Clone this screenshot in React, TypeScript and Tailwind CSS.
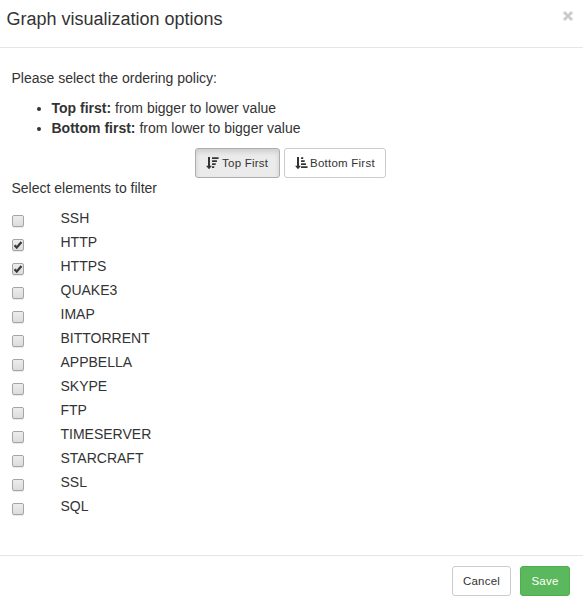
import React, { useState } from "react";

const PROTOCOLS = [
  "SSH", "HTTP", "HTTPS", "QUAKE3", "IMAP", "BITTORRENT", "APPBELLA",
  "SKYPE", "FTP", "TIMESERVER", "STARCRAFT", "SSL", "SQL",
];

function SortIcon({ widths }: { widths: number[] }) {
  return (
    <svg width="13" height="12" viewBox="0 0 13 12" className="block shrink-0" fill="currentColor" aria-hidden="true">
      <path d="M2 0h2v8.8h1.4q.5.1.2.5L3.2 11.9q-.2.1-.4 0L.4 9.3q-.3-.4.2-.5H2z" />
      {widths.map((w, i) => (
        <rect key={i} x="6" y={i * 3 + 0.2} width={w} height="1.7" rx="0.2" />
      ))}
    </svg>
  );
}

function Checkbox({ checked, onChange, label }: { checked: boolean; onChange: () => void; label: string }) {
  return (
    <button
      type="button"
      role="checkbox"
      aria-checked={checked}
      aria-label={label}
      onClick={onChange}
      className="mt-[7px] flex size-3 items-center justify-center rounded-[2px] border border-[#a5a5a5] bg-linear-to-b from-[#ededed] to-[#dcdcdc] shadow-[0_1px_0_#e8e8e8]"
    >
      {checked && (
        <svg width="10" height="10" viewBox="0 0 10 10" className="block shrink-0" fill="none" aria-hidden="true">
          <path d="M1.5 5.3 3.7 7.5 8.5 2.1" stroke="#3c3c3c" strokeWidth="2.3" />
        </svg>
      )}
    </button>
  );
}

export default function App() {
  const [checked, setChecked] = useState<string[]>(["HTTP", "HTTPS"]);
  const [order, setOrder] = useState("top");
  const toggle = (name: string) =>
    setChecked((c) => (c.includes(name) ? c.filter((n) => n !== name) : [...c, name]));
  const active = "border-[#adadad] bg-[#ebebeb] shadow-[inset_0_3px_5px_rgba(0,0,0,0.125)]";
  const idle = "border-[#ccc] bg-white";

  return (
    <div className="flex h-[602px] w-[583px] flex-col overflow-hidden bg-white font-['Liberation_Sans',Arial,sans-serif] text-[14px] leading-5 text-[#333]">
      <header className="flex h-12 shrink-0 items-start justify-between border-b border-[#e5e5e5] pl-[6.5px] pr-[9px]">
        <h4 className="pt-[6px] text-[18px] leading-[26px]">Graph visualization options</h4>
        <button type="button" aria-label="Close" className="mt-[10px] text-[#ccc]">
          <svg width="12" height="12" viewBox="0 0 12 12" className="block" aria-hidden="true">
            <path d="m2 2 8 8m0-8-8 8" stroke="currentColor" strokeWidth="2.9" />
          </svg>
        </button>
      </header>

      <main className="flex-1 pl-[11.5px] pr-3 pt-5">
        <p className="mb-[10px]">Please select the ordering policy:</p>
        <ul className="mb-[10px] list-disc pl-10">
          <li><b>Top first:</b> from bigger to lower value</li>
          <li><b>Bottom first:</b> from lower to bigger value</li>
        </ul>
        <div className="flex justify-center gap-1 pr-[1.5px] text-[11.5px] leading-[18px] tracking-[0.24px]">
          <button type="button" onClick={() => setOrder("top")} className={`flex h-[30px] w-[85px] items-center gap-[3px] whitespace-nowrap rounded-[3px] border pl-[10px] ${order === "top" ? active : idle}`}>
            <SortIcon widths={[6.5, 5, 3.7, 2.2]} />
            Top First
          </button>
          <button type="button" onClick={() => setOrder("bottom")} className={`flex h-[30px] w-[102px] items-center gap-[2px] whitespace-nowrap rounded-[3px] border pl-[10px] ${order === "bottom" ? active : idle}`}>
            <SortIcon widths={[2.2, 3.7, 5, 6.5]} />
            Bottom First
          </button>
        </div>
        <p className="mb-[10px]">Select elements to filter</p>
        <ul>
          {PROTOCOLS.map((name) => (
            <li key={name} className="grid h-6 grid-cols-[49px_1fr] items-start">
              <Checkbox label={name} checked={checked.includes(name)} onChange={() => toggle(name)} />
              <span>{name}</span>
            </li>
          ))}
        </ul>
      </main>

      <footer className="flex h-[47px] shrink-0 items-start justify-end gap-[9px] border-t border-[#e5e5e5] pr-[13px] pt-[10px] text-[11.5px] leading-[18px] tracking-[0.24px]">
        <button type="button" className="h-[30px] w-[59px] rounded-[3px] border border-[#ccc] bg-white">Cancel</button>
        <button type="button" className="h-[30px] w-[50px] rounded-[3px] border border-[#4cae4c] bg-[#5cb85c] text-white">Save</button>
      </footer>
    </div>
  );
}
